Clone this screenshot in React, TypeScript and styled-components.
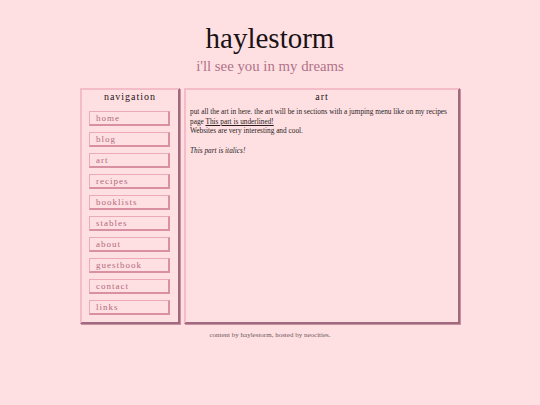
import React from "react";
import styled, { createGlobalStyle } from "styled-components";

const Global = createGlobalStyle`
  html, body { margin: 0; padding: 0; background: #ffe0e2; }
  body { font-family: "Liberation Serif", "Times New Roman", serif; color: #222; }
`;

const Page = styled.div`
  width: 380px;
  margin: 0 auto;
  padding-top: 20px;
  display: flex;
  flex-direction: column;
  align-items: stretch;
`;

const Title = styled.h1`
  margin: 0;
  text-align: center;
  font-weight: normal;
  font-size: 29px;
  line-height: 36px;
  color: #1a1214;
`;

const Subtitle = styled.h2`
  margin: 0;
  text-align: center;
  font-weight: normal;
  font-size: 14.8px;
  line-height: 20px;
  color: #b07288;
`;

const Columns = styled.div`
  display: flex;
  gap: 4px;
  margin-top: 12px;
`;

const Panel = styled.div<{ $w?: number }>`
  box-sizing: border-box;
  ${(p) => (p.$w ? `width: ${p.$w}px; flex: none;` : "flex: 1;")}
  height: 236px;
  border: 2px solid #f3bcc6;
  border-right-color: #a06a7e;
  border-bottom-color: #a06a7e;
  box-shadow: 1px 1px 0 #c890a0;
  background: #ffe0e2;
`;

const PanelHead = styled.div`
  text-align: center;
  font-size: 10px;
  letter-spacing: 1px;
  line-height: 12px;
  margin-top: 1px;
  color: #1e1418;
`;

const NavList = styled.nav`
  display: flex;
  flex-direction: column;
  gap: 6px;
  padding: 8px 8px 0 7px;
`;

const NavButton = styled.a`
  box-sizing: border-box;
  display: block;
  height: 15px;
  border: 1px solid #eaaab8;
  border-right: 2px solid #d890a2;
  border-bottom: 2px solid #d890a2;
  padding-left: 6px;
  font-size: 9px;
  line-height: 12px;
  letter-spacing: 1px;
  color: #b06a80;
  text-decoration: none;
`;

const Body = styled.div`
  padding: 4px 4px 0 4px;
  font-size: 7.3px;
  line-height: 9.7px;
  color: #2a1e22;
  p { margin: 0; }
`;

const Gap = styled.div`
  height: 9.7px;
`;

const Footer = styled.div`
  text-align: center;
  font-size: 7px;
  color: #6e5860;
  margin-top: 7px;
`;

const links = ["home", "blog", "art", "recipes", "booklists", "stables", "about", "guestbook", "contact", "links"];

export default function App() {
  return (
    <>
      <Global />
      <Page>
        <Title>haylestorm</Title>
        <Subtitle>i'll see you in my dreams</Subtitle>
        <Columns>
          <Panel $w={100}>
            <PanelHead>navigation</PanelHead>
            <NavList>
              {links.map((l) => (
                <NavButton key={l} href="#">{l}</NavButton>
              ))}
            </NavList>
          </Panel>
          <Panel>
            <PanelHead>art</PanelHead>
            <Body>
              <p>
                put all the art in here. the art will be in sections with a jumping menu like on my recipes page{" "}
                <u>This part is underlined!</u>
              </p>
              <p>Websites are very interesting and cool.</p>
              <Gap />
              <p><i>This part is italics!</i></p>
            </Body>
          </Panel>
        </Columns>
        <Footer>content by haylestorm, hosted by neocities.</Footer>
      </Page>
    </>
  );
}
